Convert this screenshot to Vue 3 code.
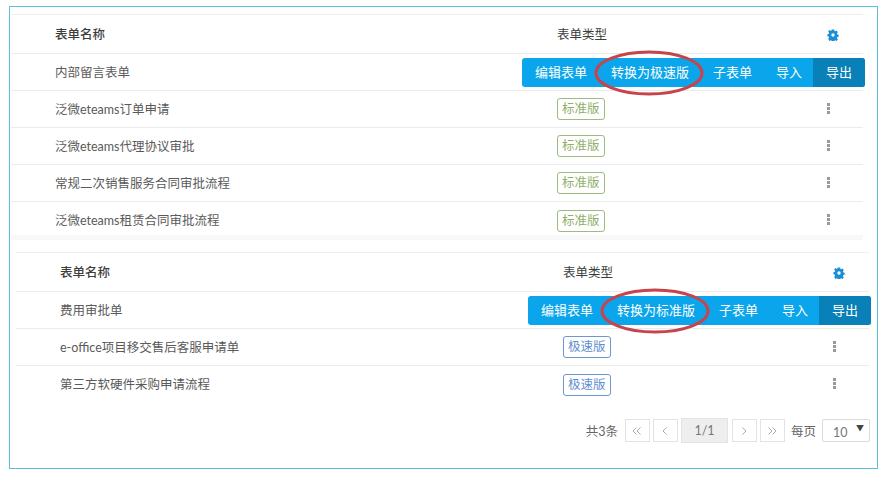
<script setup>
const sections = [
  {
    id: 'a',
    activeName: '内部留言表单',
    convert: '转换为极速版',
    rows: ['泛微eteams订单申请', '泛微eteams代理协议审批', '常规二次销售服务合同审批流程', '泛微eteams租赁合同审批流程'],
    tag: '标准版',
    tagClass: 'std'
  },
  {
    id: 'b',
    activeName: '费用审批单',
    convert: '转换为标准版',
    rows: ['e-office项目移交售后客服申请单', '第三方软硬件采购申请流程'],
    tag: '极速版',
    tagClass: 'fast'
  }
]
</script>

<template>
  <div class="frame">
    <section v-for="s in sections" :key="s.id" class="table" :class="s.id">
      <div class="row head">
        <span class="name">表单名称</span>
        <span class="type">表单类型</span>
        <span class="op">
          <svg class="gear" viewBox="0 0 12 12" width="12" height="12">
            <path fill="#1b8ed6" fill-rule="evenodd" d="M4.800.4h2.400l.3 1.500.8.400 1.300-.8 1.300 1.700-1 1.100.2.900 1.500.5v2.100l-1.500.5-.2.900 1 1.100-1.300 1.700-1.300-.8-.8.400-.3 1.500H4.800l-.3-1.500-.8-.4-1.300.8L1.100 9.800l1-1.100-.2-.9L.4 7.300V5.200l1.500-.5.2-.9-1-1.100L2.400 1l1.300.8.800-.4zM6 4.300a1.700 1.700 0 1 0 0 3.400 1.700 1.700 0 0 0 0-3.400z"/>
          </svg>
        </span>
      </div>
      <div class="row active">
        <span class="name">{{ s.activeName }}</span>
        <div class="toolbar">
          <span class="btn">编辑表单</span>
          <span class="btn">{{ s.convert }}</span>
          <span class="btn">子表单</span>
          <span class="btn">导入</span>
          <span class="btn dark">导出</span>
          <svg class="circle" viewBox="0 0 110 46" width="110" height="46">
            <ellipse cx="55" cy="23" rx="53" ry="21" fill="none" stroke="#c8444d" stroke-width="3"/>
          </svg>
        </div>
      </div>
      <div v-for="r in s.rows" :key="r" class="row">
        <span class="name">{{ r }}</span>
        <span class="type"><span class="tag" :class="s.tagClass">{{ s.tag }}</span></span>
        <span class="op"><i class="kebab"></i></span>
      </div>
    </section>
    <div class="pager">
      <span class="txt">共3条</span>
      <span class="pg"><svg viewBox="0 0 10 10" width="10" height="10"><path d="M4.500 1.500 1 5l3.500 3.500M8.500 1.500 5 5l3.500 3.500"/></svg></span>
      <span class="pg"><svg viewBox="0 0 10 10" width="10" height="10"><path d="M6.500 1.500 3 5l3.500 3.500"/></svg></span>
      <span class="pg cur">1/1</span>
      <span class="pg"><svg viewBox="0 0 10 10" width="10" height="10"><path d="M3.500 1.500 7 5 3.500 8.500"/></svg></span>
      <span class="pg"><svg viewBox="0 0 10 10" width="10" height="10"><path d="M1.500 1.500 5 5 1.500 8.500M5.500 1.500 9 5 5.500 8.500"/></svg></span>
      <span class="txt per">每页</span>
      <span class="sel">10<b>▼</b></span>
    </div>
  </div>
</template>

<style scoped>
.frame {
  box-sizing: border-box;
  width: 869px;
  height: 463px;
  margin: 6px 0 0 9px;
  border: 1px solid #5cbfe0;
  padding-top: 7px;
  font-family: Lato, "Noto Sans CJK SC", sans-serif;
  font-size: 12.5px;
  color: #5a5a5a;
  background: #fff;
}
.table {
  width: 852px;
  border-top: 1px solid #eef0f0;
}
.table.a {
  margin-left: 1px;
  padding-bottom: 1px;
  background: linear-gradient(#f8f8f8, #f8f8f8) bottom / 100% 5px no-repeat;
}
.table.b {
  width: 853px;
  margin: 12px 0 0 6px;
}
.row {
  display: grid;
  grid-template-columns: 546px 246px 60px;
  align-items: center;
  height: 37px;
  box-sizing: border-box;
  padding-bottom: 2px;
  border-bottom: 1px solid #e9ecec;
}
.b .row {
  grid-template-columns: 547px 246px 60px;
}
.row:last-child {
  border-bottom: none;
}
.row.head {
  height: 39px;
  padding-bottom: 2px;
  color: #3c3c3c;
}
.name {
  padding-left: 44px;
  white-space: nowrap;
}
.head .name {
  font-weight: 500;
}
.op {
  display: flex;
  justify-content: center;
}
.gear {
  display: block;
  margin-top: 3px;
}
.kebab {
  display: block;
  width: 3px;
  height: 3px;
  margin-right: 10px;
  background: #999;
  box-shadow: 0 4px 0 #999, 0 -4px 0 #999;
}
.type {
  display: flex;
}
.tag {
  display: block;
  box-sizing: border-box;
  height: 22px;
  margin-top: 2px;
  line-height: 20px;
  padding: 0 4px;
  border: 1px solid;
  border-radius: 3px;
}
.tag.std {
  color: #8fb06a;
  border-color: #9dbb7c;
}
.tag.fast {
  color: #5f8fcf;
  border-color: #6b97d3;
}
.toolbar {
  position: relative;
  grid-column: 1 / -1;
  grid-row: 1;
  justify-self: end;
  display: flex;
  height: 29px;
  margin: 2px -2px 0 0;
  border-radius: 3px;
  background: #0aa5ea;
  color: #fff;
  font-size: 13px;
}
.btn {
  padding: 0 12px;
  line-height: 29px;
}
.btn:first-child {
  padding-left: 13px;
}
.btn:nth-child(4) {
  padding-right: 11px;
}
.btn.dark {
  padding: 0 13px;
  background: #0a80b8;
  border-radius: 0 3px 3px 0;
}
.circle {
  position: absolute;
  left: 72px;
  top: -8px;
}
.row.active .name {
  grid-column: 1;
  grid-row: 1;
}
.pager {
  display: flex;
  align-items: center;
  justify-content: flex-end;
  gap: 3px;
  width: 860px;
  margin-top: 15px;
  color: #666;
}
.txt {
  margin-right: 4px;
}
.per {
  margin: 0 3px;
}
.pg {
  box-sizing: border-box;
  display: flex;
  align-items: center;
  justify-content: center;
  width: 25px;
  height: 23px;
  border: 1px solid #e3e3e3;
}
.pg svg {
  fill: none;
  stroke: #aaa;
  stroke-width: 1;
}
.pg.cur {
  width: 47px;
  height: 25px;
  margin-right: 1px;
  background: #eeeeee;
  color: #777;
}
.sel {
  box-sizing: border-box;
  display: flex;
  justify-content: space-between;
  width: 48px;
  height: 23px;
  padding: 3px 5px 0 10px;
  line-height: 20px;
  border: 1px solid #dcdcdc;
  border-radius: 2px;
  color: #777;
}
.sel b {
  margin-top: -1px;
  font-size: 8px;
  font-weight: 400;
  line-height: 13px;
  color: #444;
}
</style>
